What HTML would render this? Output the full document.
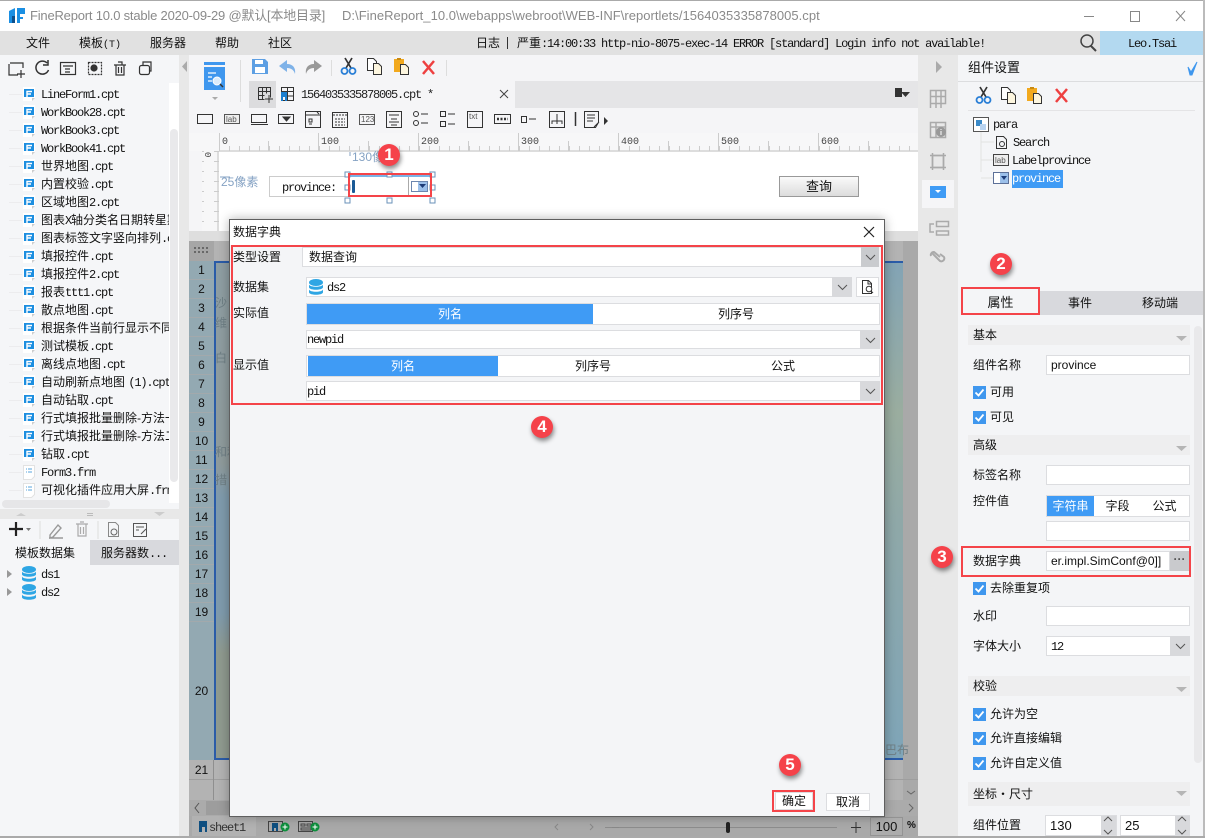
<!DOCTYPE html>
<html lang="zh"><head><meta charset="utf-8"><title>FineReport</title>
<style>
html,body{margin:0;padding:0;width:1205px;height:838px;overflow:hidden;background:#f5f6f8}
body{position:relative;font:12px/16px "Liberation Sans","Noto Sans CJK SC",sans-serif;color:#111}
.b,.t,svg{position:absolute}
.t{white-space:nowrap;height:16px;line-height:16px}
i{font:normal 12px/16px "Liberation Mono","Noto Sans CJK SC",monospace;letter-spacing:-1.2px}
.c{text-align:center}
.f{background:#fff;border:1px solid #dcdde0;box-sizing:border-box}
.s{background:#eeeeef;left:968px;width:222px;box-sizing:border-box;padding-left:5px;line-height:20px;height:20px}
.btn{background:#d8d9dc;box-sizing:border-box}
.bd{position:absolute;width:22px;height:22px;border-radius:50%;background:#f5424a;color:#fff;font:bold 17px/22px "Liberation Sans",sans-serif;text-align:center;box-shadow:1px 3px 5px rgba(0,0,0,.45)}
.red{position:absolute;border:2px solid #f44449;box-sizing:border-box}
.r{left:41px}
.n{left:189px;width:25px;text-align:center;color:#111}
.g{color:#6f7f85}
</style></head><body>

<!-- base regions -->
<div class="b" style="left:0;top:0;width:1205px;height:31px;background:#fff;border-top:1px solid #aaa;box-sizing:border-box"></div>
<div class="b" style="left:0;top:31px;width:1205px;height:24px;background:#e1e1e1"></div>
<div class="b" style="left:1100px;top:31px;width:105px;height:24px;background:#b3d9f0"></div>
<div class="b" style="left:0;top:55px;width:180px;height:783px;background:#f5f6f8"></div>
<div class="b" style="left:169px;top:83px;width:10px;height:420px;background:#fff"></div>
<div class="b" style="left:170px;top:129px;width:8px;height:353px;background:#e9e9eb;border-radius:4px"></div>
<div class="b" style="left:2px;top:500px;width:108px;height:8px;background:#e6e6e8;border-radius:4px"></div>
<div class="b" style="left:0;top:509px;width:179px;height:10px;background:#e8e8e8"></div>
<div class="b" style="left:90px;top:540px;width:89px;height:25px;background:#d8d9dd"></div>
<div class="b" style="left:179px;top:55px;width:10px;height:783px;background:#e8e8e8"></div>
<div class="b" style="left:9px;top:94px;width:13px;height:414px;background:repeating-linear-gradient(#ececee 0 1px,transparent 1px 18px)"></div>
<div class="b" style="left:189px;top:55px;width:729px;height:26px;background:#f5f5f7"></div>
<div class="b" style="left:249px;top:81px;width:669px;height:27px;background:#e5e5e7"></div>
<div class="b" style="left:189px;top:81px;width:60px;height:52px;background:#f5f5f7"></div>
<div class="b" style="left:249px;top:81px;width:27px;height:27px;background:#dcdcde"></div>
<div class="b" style="left:276px;top:81px;width:239px;height:27px;background:#f5f5f7"></div>
<div class="b" style="left:189px;top:108px;width:729px;height:25px;background:#f5f5f7"></div>
<div class="b" style="left:189px;top:133px;width:729px;height:18px;background:#f7f7f8"></div>
<div class="b" style="left:189px;top:151px;width:729px;height:80px;background:#fff"></div>
<div class="b" style="left:189px;top:151px;width:13px;height:80px;background:#f5f5f7"></div>
<div class="b" style="left:202px;top:151px;width:17px;height:80px;background:#f7f7f8;border-right:2px solid #ddd;box-sizing:border-box"></div>
<div class="b" style="left:219px;top:150px;width:699px;height:2px;background:#ddd"></div>
<div class="b" style="left:918px;top:55px;width:40px;height:783px;background:#e8e8e8"></div>
<div class="b" style="left:922px;top:180px;width:32px;height:28px;background:#f5f5f7"></div>
<div class="b" style="left:958px;top:55px;width:247px;height:783px;background:#f4f5f7"></div>
<div class="b" style="left:958px;top:81px;width:247px;height:1px;background:#dcdddf"></div>
<div class="b" style="left:968px;top:110px;width:227px;height:1px;background:#e4e4e6"></div>
<div class="b" style="left:1040px;top:291px;width:165px;height:24px;background:#d8d9dd"></div>
<div class="b" style="left:1194px;top:326px;width:8px;height:437px;background:#e9e9eb;border-radius:4px"></div>
<div class="b" style="left:1203px;top:0;width:2px;height:838px;background:#bbb"></div>
<div class="b" style="left:0;top:836px;width:1205px;height:2px;background:#aaa"></div>

<!-- dimmed sheet -->
<div class="b" style="left:189px;top:231px;width:729px;height:10px;background:#dedede"></div>
<div class="b" style="left:189px;top:241px;width:729px;height:559px;background:#b3b3b3"></div>
<div class="b" style="left:189px;top:241px;width:25px;height:20px;background:#a6a6a6"></div>
<div class="b" style="left:189px;top:261px;width:25px;height:499px;background:repeating-linear-gradient(#93a9b2 0 18px,#a2a9ac 18px 19px)"></div>
<div class="b" style="left:189px;top:622px;width:25px;height:138px;background:#93a9b2"></div>
<div class="b" style="left:214px;top:261px;width:15px;height:499px;background:linear-gradient(#8e9ea3 0,#8f9b9c 200px,#7f9bad 235px,#7f9bad 350px,#8f9a8f 390px,#8f9a8f 100%);border-left:2px solid #2a5ca8;border-bottom:2px solid #2a5ca8;border-top:2px solid #2a5ca8;box-sizing:border-box"></div>
<div class="b" style="left:885px;top:261px;width:18px;height:499px;background:linear-gradient(#83a4b5,#9aad9f 150px,#8fa8a8 260px,#7fa5b8 100%);border-top:2px solid #2a5ca8;border-bottom:2px solid #2a5ca8;box-sizing:border-box"></div>
<div class="b" style="left:903px;top:241px;width:15px;height:559px;background:#a9a9a9"></div>
<div class="b" style="left:214px;top:779px;width:704px;height:1px;background:#9e9e9e"></div>
<div class="b" style="left:189px;top:779px;width:729px;height:1px;background:#9e9e9e"></div>
<div class="b" style="left:213px;top:760px;width:1px;height:40px;background:#8f8f8f"></div>
<div class="b" style="left:189px;top:800px;width:729px;height:16px;background:#ababab"></div>
<div class="b" style="left:206px;top:801px;width:25px;height:14px;background:#9d9d9d"></div>
<div class="b" style="left:189px;top:816px;width:729px;height:20px;background:#a9a9a9"></div>
<div class="b" style="left:192px;top:816px;width:64px;height:20px;background:#b2b2b2"></div>
<div class="b" style="left:870px;top:817px;width:33px;height:19px;background:#acacac;border:1px solid #939393;box-sizing:border-box"></div>
<div class="b" style="left:605px;top:827px;width:232px;height:1px;background:#8c8c8c"></div>
<div class="b" style="left:726px;top:822px;width:4px;height:11px;background:#222;border-radius:2px"></div>

<div class="t n" style="top:262px">1</div><div class="t n" style="top:281px">2</div><div class="t n" style="top:300px">3</div><div class="t n" style="top:319px">4</div><div class="t n" style="top:338px">5</div><div class="t n" style="top:357px">6</div><div class="t n" style="top:376px">7</div><div class="t n" style="top:395px">8</div><div class="t n" style="top:414px">9</div><div class="t n" style="top:433px">10</div><div class="t n" style="top:452px">11</div><div class="t n" style="top:471px">12</div><div class="t n" style="top:490px">13</div><div class="t n" style="top:509px">14</div><div class="t n" style="top:528px">15</div><div class="t n" style="top:547px">16</div><div class="t n" style="top:566px">17</div><div class="t n" style="top:585px">18</div><div class="t n" style="top:604px">19</div><div class="t n" style="top:683px">20</div><div class="t n" style="top:762px">21</div>
<div class="t g" style="left:215px;top:295px">沙</div><div class="t g" style="left:215px;top:315px">维</div><div class="t g" style="left:215px;top:350px">白</div><div class="t g" style="left:215px;top:444px">和利</div><div class="t g" style="left:215px;top:472px">措</div>
<div class="t g" style="left:885px;top:742px">巴布</div>

<!-- title bar -->
<div class="t" style="left:30px;top:8px;color:#8a8a8a;font-size:13px;letter-spacing:-.2px">FineReport 10.0 stable 2020-09-29 @默认[本地目录]</div>
<div class="t" style="left:342px;top:8px;color:#8a8a8a;font-size:13px;letter-spacing:.03px">D:\FineReport_10.0\webapps\webroot\WEB-INF\reportlets/1564035335878005.cpt</div>
<!-- menu -->
<div class="t" style="left:26px;top:35px">文件</div>
<div class="t" style="left:79px;top:35px">模板<i style="font-size:10px;letter-spacing:0">(T)</i></div>
<div class="t" style="left:150px;top:35px">服务器</div>
<div class="t" style="left:215px;top:35px">帮助</div>
<div class="t" style="left:268px;top:35px">社区</div>
<div class="t" style="left:476px;top:35px">日志</div>
<div class="b" style="left:507px;top:37px;width:1px;height:12px;background:#333"></div>
<div class="t" style="left:517px;top:35px">严重<i>:14:00:33 http-nio-8075-exec-14 ERROR [standard] Login info not available!</i></div>
<div class="t" style="left:1128px;top:35px"><i>Leo.Tsai</i></div>

<!-- file tree -->
<div class="b" style="left:0;top:80px;width:169px;height:420px;overflow:hidden">
<div class="t r" style="top:6px"><i>LineForm1.cpt</i></div>
<div class="t r" style="top:24px"><i>WorkBook28.cpt</i></div>
<div class="t r" style="top:42px"><i>WorkBook3.cpt</i></div>
<div class="t r" style="top:60px"><i>WorkBook41.cpt</i></div>
<div class="t r" style="top:78px">世界地图<i>.cpt</i></div>
<div class="t r" style="top:96px">内置校验<i>.cpt</i></div>
<div class="t r" style="top:114px">区域地图<i>2.cpt</i></div>
<div class="t r" style="top:132px">图表<i>X</i>轴分类名日期转星期</div>
<div class="t r" style="top:150px">图表标签文字竖向排列<i>.cpt</i></div>
<div class="t r" style="top:168px">填报控件<i>.cpt</i></div>
<div class="t r" style="top:186px">填报控件<i>2.cpt</i></div>
<div class="t r" style="top:204px">报表<i>ttt1.cpt</i></div>
<div class="t r" style="top:222px">散点地图<i>.cpt</i></div>
<div class="t r" style="top:240px">根据条件当前行显示不同</div>
<div class="t r" style="top:258px">测试模板<i>.cpt</i></div>
<div class="t r" style="top:276px">离线点地图<i>.cpt</i></div>
<div class="t r" style="top:294px">自动刷新点地图 <i>(1).cpt</i></div>
<div class="t r" style="top:312px">自动钻取<i>.cpt</i></div>
<div class="t r" style="top:330px">行式填报批量删除-方法一</div>
<div class="t r" style="top:348px">行式填报批量删除-方法二</div>
<div class="t r" style="top:366px">钻取<i>.cpt</i></div>
<div class="t r" style="top:384px"><i>Form3.frm</i></div>
<div class="t r" style="top:402px">可视化插件应用大屏<i>.frm</i></div>
</div>
<div class="t" style="left:15px;top:545px">模板数据集</div>
<div class="t" style="left:101px;top:545px">服务器数<i>...</i></div>
<div class="t" style="left:41px;top:566px"><i>ds1</i></div>
<div class="t" style="left:41px;top:584px"><i>ds2</i></div>

<!-- toolbar tab -->
<div class="t" style="left:301px;top:86px"><i style="color:#222">1564035335878005.cpt *</i></div>

<!-- canvas -->
<div class="t" style="left:352px;top:149px;color:#86a3c4">130像素</div>
<div class="t" style="left:221px;top:174px;color:#86a3c4">25像素</div>
<div class="b" style="left:269px;top:176px;width:81px;height:21px;border:1px solid #ccc;box-sizing:border-box;background:#fff"></div>
<div class="t" style="left:282px;top:179px"><i>province:</i></div>
<div class="b" style="left:349px;top:175px;width:82px;height:21px;background:#fff;border-top:2px solid #7ab3e6;box-sizing:border-box"></div>
<div class="b" style="left:408px;top:177px;width:1px;height:18px;background:#aaa"></div>
<div class="b" style="left:352px;top:180px;width:3px;height:13px;background:#1a5a96;border-radius:1px"></div>
<div class="b" style="left:779px;top:176px;width:80px;height:21px;background:linear-gradient(#fafafa,#dcdcdc);border:1px solid #999;box-sizing:border-box;text-align:center;line-height:19px;font-size:13px">查询</div>

<!-- right panel text -->
<div class="t" style="left:968px;top:60px;font-size:13px">组件设置</div>
<div class="t" style="left:993px;top:116px"><i>para</i></div>
<div class="t" style="left:1013px;top:134px"><i>Search</i></div>
<div class="t" style="left:1012px;top:152px"><i>Labelprovince</i></div>
<div class="b" style="left:1012px;top:170px;width:51px;height:18px;background:#3f9bf5"></div>
<div class="t" style="left:1012px;top:170px;color:#fff"><i>province</i></div>
<div class="t c" style="left:961px;top:295px;width:79px;font-size:13px">属性</div>
<div class="t c" style="left:1040px;top:295px;width:80px">事件</div>
<div class="t c" style="left:1120px;top:295px;width:80px">移动端</div>

<div class="b s" style="top:325px">基本</div>
<div class="t" style="left:973px;top:357px">组件名称</div>
<div class="b f" style="left:1046px;top:355px;width:144px;height:20px;padding-left:4px;line-height:18px">province</div>
<div class="t" style="left:990px;top:384px">可用</div>
<div class="t" style="left:990px;top:409px">可见</div>
<div class="b s" style="top:435px">高级</div>
<div class="t" style="left:973px;top:467px">标签名称</div>
<div class="b f" style="left:1046px;top:465px;width:144px;height:20px"></div>
<div class="t" style="left:973px;top:493px">控件值</div>
<div class="b f" style="left:1046px;top:495px;width:144px;height:22px"></div>
<div class="b c" style="left:1047px;top:496px;width:47px;height:20px;background:#3f9bf5;color:#fff;line-height:20px">字符串</div>
<div class="t c" style="left:1094px;top:498px;width:47px">字段</div>
<div class="t c" style="left:1141px;top:498px;width:47px">公式</div>
<div class="b f" style="left:1046px;top:521px;width:144px;height:20px"></div>

<div class="t" style="left:973px;top:553px">数据字典</div>
<div class="b f" style="left:1046px;top:551px;width:124px;height:20px;padding-left:4px;line-height:18px;white-space:nowrap;overflow:hidden">er.impl.SimConf@0]]</div>
<div class="b c" style="left:1170px;top:551px;width:19px;height:20px;background:#c9cacd;line-height:17px;color:#555;font-weight:bold">···</div>
<div class="t" style="left:990px;top:580px">去除重复项</div>
<div class="t" style="left:973px;top:608px">水印</div>
<div class="b f" style="left:1046px;top:606px;width:144px;height:20px"></div>
<div class="t" style="left:973px;top:638px">字体大小</div>
<div class="b f" style="left:1046px;top:636px;width:144px;height:20px;padding-left:4px;line-height:18px"><i>12</i></div>
<div class="b btn" style="left:1170px;top:636px;width:20px;height:20px"></div>
<div class="b s" style="top:676px">校验</div>
<div class="t" style="left:990px;top:706px">允许为空</div>
<div class="t" style="left:990px;top:730px">允许直接编辑</div>
<div class="t" style="left:990px;top:755px">允许自定义值</div>
<div class="b s" style="top:782px;height:24px;line-height:24px">坐标・尺寸</div>
<div class="t" style="left:973px;top:817px">组件位置</div>
<div class="b f" style="left:1045px;top:815px;width:72px;height:21px;padding-left:4px;line-height:19px;font-size:13px">130</div>
<div class="b btn" style="left:1101px;top:816px;width:15px;height:19px"></div>
<div class="b f" style="left:1120px;top:815px;width:70px;height:21px;padding-left:4px;line-height:19px;font-size:13px">25</div>
<div class="b btn" style="left:1175px;top:816px;width:15px;height:19px"></div>

<div class="t" style="left:209px;top:819px;color:#333"><i>sheet1</i></div>
<div class="t c" style="left:870px;top:819px;width:33px;font-size:13px">100</div>
<div class="t" style="left:907px;top:818px;font-weight:bold;font-size:10px">%</div>

<!-- icons below modal -->
<svg style="left:0;top:0" width="1205" height="838" viewBox="0 0 1205 838" fill="none">
<defs>
<g id="fi"><path d="M0 0h12v11l-3 3H0z" fill="#fff"/><path d="M9 14l3-3H9z" fill="#ccc"/><rect x="1" y="2" width="10" height="8" fill="#1c8ee0"/><path d="M4 10V4.500h5M4 7h4" stroke="#fff" stroke-width="1.400"/></g>
<g id="fr"><path d="M.5.500h11v11l-3 3H.5z" fill="#fff" stroke="#e2e2e2"/><path d="M3 4h1M5 4h4M3 7h1M5 7h4" stroke="#59a4dc"/></g>
<g id="db"><ellipse cx="8" cy="3.500" rx="7" ry="3.500" fill="#2ea6e4"/><path d="M1 5.500c1 3 13 3 14 0v3c-1 3-13 3-14 0z" fill="#2ea6e4"/><path d="M1 10.500c1 3 13 3 14 0v3c-1 3-13 3-14 0z" fill="#2ea6e4"/></g>
<g id="tri"><path d="M0 0l5 4-5 4z" fill="#999"/></g>
<g id="cut"><path d="M5 0l6 10M12 0L6 10" stroke="#333" stroke-width="1.700"/><circle cx="4.500" cy="13" r="3" stroke="#2a7fd6" stroke-width="1.800"/><circle cx="12.500" cy="13" r="3" stroke="#2a7fd6" stroke-width="1.800"/></g>
<g id="cp"><path d="M.5.500h6l3 3v9h-9z" fill="#fff" stroke="#333"/><path d="M6.500 5.500h5l3 3v8h-8z" fill="#fdf6df" stroke="#333"/></g>
<g id="pt"><rect x="0" y="1" width="10" height="13" fill="#f2a91e"/><rect x="3" y="0" width="4" height="2" fill="#c88a12"/><path d="M6.500 6.500h5l3 3v7h-8z" fill="#fdf6df" stroke="#333"/></g>
<g id="dl"><path d="M1 1l11 13M12 1L1 14" stroke="#ee4040" stroke-width="2.500"/></g>
<g id="ck"><rect width="13" height="13" fill="#3f97ee"/><path d="M2.500 6.500l3 3 5-6" stroke="#fff" stroke-width="1.800"/></g>
<g id="dn"><path d="M0 0l4.500 4.500L9 0" stroke="#555" stroke-width="1"/></g>
<g id="hd"><rect width="5" height="5" fill="#fff" stroke="#6a92b8"/></g>
<g id="sec"><path d="M0 0h11l-5.500 5z" fill="#b5b5b5"/></g>
<pattern id="tk" x="219" y="133" width="10" height="18" patternUnits="userSpaceOnUse"><path d="M.5 13v5" stroke="#ccc"/></pattern>
<pattern id="tky" y="151" width="17" height="10" patternUnits="userSpaceOnUse"><path d="M10 .5h7" stroke="#ccc"/></pattern>
</defs>
<!-- logo -->
<path d="M9 11l6-3v15H9z" fill="#1a8fe3"/><path d="M17 8h8v6h-5v3h3v2h-3v4h-3z" fill="#1a8fe3"/><path d="M12 16h3v7h-3z" fill="#0b4f8c"/>
<!-- window -->
<path d="M1084 16.500h10M1130.500 11.500h9v10h-9zM1176 11l9 10M1185 11l-9 10" stroke="#888"/>
<circle cx="1087" cy="41" r="6" stroke="#444" stroke-width="1.500"/><path d="M1091 46l5 5" stroke="#444" stroke-width="2"/>
<!-- left tools -->
<g stroke="#333" stroke-width="1.200">
<path d="M10 63h13v5M9 64v11h9M21 70v8M17 74h8"/>
<path d="M47 63a6.500 6.500 0 1 0 1.500 7M48 60v5h-5" stroke-width="1.500"/>
<rect x="60.500" y="62.500" width="15" height="12"/><path d="M63 66h10M65 69h5M65 72h5"/>
<rect x="88.500" y="62.500" width="13" height="12" stroke-dasharray="2 1"/><circle cx="94" cy="68" r="3" fill="#333"/>
<path d="M114 65h12M116 65v10h8V65M118 62h4v3M118.500 67v6M121.500 67v6"/>
<rect x="139.500" y="65.500" width="10" height="9" rx="2"/><path d="M143 65v-3h8v9h-2"/>
</g>
<!-- tree icons -->
<use href="#fi" x="23" y="87"/><use href="#fi" x="23" y="105"/><use href="#fi" x="23" y="123"/><use href="#fi" x="23" y="141"/><use href="#fi" x="23" y="159"/><use href="#fi" x="23" y="177"/><use href="#fi" x="23" y="195"/><use href="#fi" x="23" y="213"/><use href="#fi" x="23" y="231"/><use href="#fi" x="23" y="249"/><use href="#fi" x="23" y="267"/><use href="#fi" x="23" y="285"/><use href="#fi" x="23" y="303"/><use href="#fi" x="23" y="321"/><use href="#fi" x="23" y="339"/><use href="#fi" x="23" y="357"/><use href="#fi" x="23" y="375"/><use href="#fi" x="23" y="393"/><use href="#fi" x="23" y="411"/><use href="#fi" x="23" y="429"/><use href="#fi" x="23" y="447"/>
<use href="#fr" x="23" y="465"/><use href="#fr" x="23" y="483"/>
<path d="M16 516l5-3 5 3zM154 512h11l-5.500 4z" fill="#ccc"/><path d="M87 513.500h6M87 515.500h6" stroke="#bbb"/>
<!-- data tools -->
<path d="M9 529h14M16 522v14" stroke="#222" stroke-width="2.200"/><path d="M26 528h5l-2.500 3z" fill="#777"/>
<path d="M40 521v18M98 521v18" stroke="#ddd"/>
<path d="M50 535l8-10 3 3-8 9-3 1zM49 538h14" stroke="#999" stroke-width="1.400"/>
<path d="M76 524h12M78 524v12h8v-12M80 522h4M80.500 527v7M83.500 527v7" stroke="#aaa" stroke-width="1.200"/>
<path d="M108.500 522.500h7l3 3v11h-10z" stroke="#888"/><circle cx="114" cy="532" r="3" stroke="#666"/>
<path d="M133.500 523.500h13v13h-13zM136 527h8M136 530h3M141 534l5-5" stroke="#555"/>
<use href="#tri" x="7" y="570"/><use href="#tri" x="7" y="588"/>
<use href="#db" x="21" y="566"/><use href="#db" x="21" y="584"/>
<!-- collapse -->
<path d="M187 61v11l-5-5.500z" fill="#aaa"/>
<path d="M936 61l6 6-6 6z" fill="#aaa"/>
<!-- big report icon -->
<path d="M204 62h21v3h-21z" fill="#3f97ee"/><path d="M204 67h21v23h-21z" fill="#3f97ee"/><path d="M208 73h8M208 77h4M208 81h4" stroke="#fff" stroke-width="1.300"/><circle cx="217" cy="81" r="4" fill="#dcecfb" stroke="#fff"/><path d="M220 84l3 3" stroke="#333" stroke-width="1.500"/>
<path d="M212 97h6l-3 3z" fill="#aaa"/>
<path d="M240.500 60v42M331.500 60v16M446.500 60v16" stroke="#ddd"/>
<!-- save/undo/redo -->
<path d="M252 59h13l3 3v12h-16z" fill="#5d9fe3"/><rect x="255" y="60" width="8" height="4" fill="#fff"/><rect x="255" y="67" width="10" height="6" fill="#fff"/>
<path d="M287 60l-8 6 8 6v-4c4 0 7 2 8 6 1-6-2-10-8-10z" fill="#7fb2e8"/>
<path d="M314 60l8 6-8 6v-4c-4 0-7 2-8 6-1-6 2-10 8-10z" fill="#999"/>
<use href="#cut" x="340" y="58"/><use href="#cp" x="367" y="58"/><use href="#pt" x="394" y="58"/><use href="#dl" x="422" y="60"/>
<!-- tab icons -->
<path d="M258.500 87.500h12v10M258.500 87.500v12h6M262.500 87.500v12M266.500 87.500v6M258.500 91.500h12M258.500 95.500h6M265 99h8M269 95v8" stroke="#333"/>
<path d="M281.500 87.500h12v13h-12zM287.500 87.500v13M281.500 91.500h12M281.500 96h12" stroke="#333"/><path d="M281 92h6v9h-2v-4h-2v4h-2z" fill="#1a7fd0"/>
<path d="M500 90l8 8M508 90l-8 8" stroke="#444"/>
<path d="M895 88h7v9h-7z" fill="#333"/><path d="M901 92h9l-4.500 5z" fill="#333"/>
<!-- widget toolbar -->
<g stroke="#333">
<rect x="197.500" y="114.500" width="15" height="9"/>
<rect x="224.500" y="114.500" width="15" height="9" fill="#eee" stroke="#555"/>
<rect x="251.500" y="114.500" width="15" height="8"/><path d="M251 124.500h17"/>
<rect x="278.500" y="114.500" width="15" height="9"/><path d="M283 117h7l-3.500 4z" fill="#333"/>
<rect x="305.500" y="111.500" width="15" height="16"/><path d="M305 115h16M317 112l2 2M309 119h3v3h-3zM309 124h3"/>
<rect x="332.500" y="112.500" width="15" height="15"/><path d="M333 115h14M335 119h10M335 122h10M335 125h10" stroke-dasharray="2 1"/>
<rect x="359.500" y="114.500" width="15" height="10" stroke="#555"/>
<rect x="386.500" y="111.500" width="15" height="16"/><path d="M389 115h10M391 119h6M389 122h10M391 125h6"/>
<circle cx="416" cy="114" r="2.500"/><circle cx="416" cy="123" r="2.500"/><path d="M421 114h7M421 123h7"/>
<rect x="440.500" y="111.500" width="5" height="5"/><rect x="440.500" y="121.500" width="5" height="5"/><path d="M448 114h7M448 124h7"/>
<rect x="467.500" y="111.500" width="15" height="16"/>
<rect x="494.500" y="114.500" width="16" height="9"/><path d="M497 119h11" stroke-width="2.500" stroke-dasharray="2 1.500"/>
<rect x="521.500" y="116.500" width="5" height="6"/><path d="M529 119h7"/>
<rect x="549.500" y="111.500" width="15" height="16"/><path d="M557 114v5M552 124v-3h10v3M557 119v5"/>
<path d="M575.500 112v14" stroke-width="1.500"/>
<path d="M584.500 111.500h14v11l-3 5h-11zM587 115h8M587 118h8M587 121h6M594 127l5-5"/>
</g>
<path d="M604 117l4 4-4 4z" fill="#333"/>
<g font-family="Liberation Sans,sans-serif" font-size="8" fill="#555"><text x="226" y="122">lab</text><text x="361" y="122">123</text><text x="469" y="119">txt</text></g>
<!-- rulers -->
<rect x="219" y="133" width="699" height="18" fill="url(#tk)"/>
<path d="M219.500 133v18M318.500 133v18M418.500 133v18M518.500 133v18M618.500 133v18M718.500 133v18M818.500 133v18M268.500 141v10M368.500 141v10M468.500 141v10M568.500 141v10M668.500 141v10M768.500 141v10M868.500 141v10" stroke="#ccc"/>
<g fill="#444" font-family="Liberation Mono,monospace" font-size="10"><text x="222" y="144">0</text><text x="321" y="144">100</text><text x="421" y="144">200</text><text x="521" y="144">300</text><text x="621" y="144">400</text><text x="721" y="144">500</text><text x="821" y="144">600</text></g>
<rect x="202" y="151" width="17" height="80" fill="url(#tky)"/>
<text x="0" y="0" transform="translate(205 152) rotate(90)" fill="#444" font-family="Liberation Mono,monospace" font-size="9">0</text>
<path d="M350 152v4M220 177h10" stroke="#86a3c4"/>
<!-- dropdown icon -->
<rect x="411.500" y="181.500" width="16" height="10" fill="#fff" stroke="#6c86ae"/><rect x="418" y="182" width="9" height="9" fill="#9cc0ea"/><path d="M419 184h7l-3.500 4z" fill="#1d3c78"/>
<use href="#hd" x="345" y="172"/><use href="#hd" x="387" y="172"/><use href="#hd" x="430" y="172"/><use href="#hd" x="345" y="185"/><use href="#hd" x="430" y="185"/><use href="#hd" x="345" y="198"/><use href="#hd" x="387" y="198"/><use href="#hd" x="430" y="198"/>
<!-- right strip -->
<g stroke="#aaa" stroke-width="1.500">
<path d="M930.500 90.500h15v13h-15zM930.500 96.500h15M930.500 103v5M936 90v18M941 90v18"/>
<path d="M930.500 122.500h15v15h-15zM930.500 127h15M936 122v15"/>
<rect x="932.500" y="155.500" width="11" height="12"/><path d="M930 155.500h16M930 167.500h16M932.500 153v17M943.500 153v17"/>
<path d="M936.500 221.500h12v5h-12zM936.500 231h12v4h-12zM934 224h-4v8h4"/>
<path d="M932 253l8 8a3 3 0 0 0 4-4l-4-3M942 261" stroke-width="2"/><path d="M931 256a3 3 0 0 1 3-4l6 5" stroke-width="2"/>
</g>
<circle cx="941" cy="132" r="5" fill="#999"/><path d="M941 129v1M941 131v4" stroke="#fff"/>
<rect x="930" y="186" width="16" height="12" fill="#3f9bf5"/><path d="M935 190h6l-3 3z" fill="#fff"/>
<!-- right top -->
<path d="M1188 67l3 5 6-10-5 13h-2z" fill="#3f97ee" stroke="#3f97ee"/>
<use href="#cut" x="975" y="87"/><use href="#cp" x="1001" y="87"/><use href="#pt" x="1027" y="87"/><use href="#dl" x="1055" y="88"/>
<!-- comp tree -->
<rect x="973.500" y="117.500" width="15" height="14" fill="#fff" stroke="#555"/><rect x="976" y="120" width="6" height="6" fill="#3b8ac8"/><rect x="980" y="124" width="6" height="6" fill="#b8d3f0"/>
<path d="M981 132v40M981 142h13M981 160h12M981 178h12" stroke="#e2e2e2"/>
<path d="M996.500 136.500h7l3 3v9h-10z" fill="#f4f5f7" stroke="#333"/><circle cx="1002" cy="144" r="2.500" stroke="#333"/>
<rect x="993.500" y="154.500" width="15" height="11" fill="#eee" stroke="#444"/>
<text x="995" y="163" font-family="Liberation Sans,sans-serif" font-size="8" fill="#555">lab</text>
<rect x="993.500" y="172.500" width="15" height="11" fill="#fff" stroke="#5c7098"/><rect x="1000" y="173" width="8" height="10" fill="#9cc0ea"/><path d="M1001 176h6l-3 4z" fill="#1d3c78"/>
<!-- section arrows -->
<use href="#sec" x="1176" y="336"/><use href="#sec" x="1176" y="446"/><use href="#sec" x="1176" y="687"/><use href="#sec" x="1176" y="791"/>
<use href="#ck" x="973" y="386"/><use href="#ck" x="973" y="411"/><use href="#ck" x="973" y="582"/><use href="#ck" x="973" y="708"/><use href="#ck" x="973" y="732"/><use href="#ck" x="973" y="757"/>
<use href="#dn" x="1176" y="644"/>
<path d="M1104 821l4-4 4 4M1104 830l4 4 4-4M1178 821l4-4 4 4M1178 830l4 4 4-4" stroke="#555"/>
<!-- bottom -->
<path d="M199 821h8v11h-2v-5h-3v5h-3z" fill="#0f4f80"/>
<path d="M268.500 821.500h14v10h-14zM298.500 821.500h14v10h-14zM301 824h4v2h-4zM307 824h4v2h-4zM301 828h10v2h-10z" stroke="#444"/><path d="M272 823h6v8h-2v-3h-2v3h-2z" fill="#0f4f80"/>
<circle cx="285" cy="827" r="4.500" fill="#0d8f3c"/><circle cx="315" cy="827" r="4.500" fill="#0d8f3c"/><path d="M282.500 827h5M285 824.500v5M312.500 827h5M315 824.500v5" stroke="#fff"/>
<path d="M199 803l-4 5 4 5" stroke="#555"/><path d="M851 827.500h10M856 822v11" stroke="#333"/>
<path d="M907 791l4 3 4-3M909 804l4 4-4 4" stroke="#666"/>
<path d="M558 824l-3 3 3 3M590 824l3 3-3 3M612 827.500h7" stroke="#888"/>
<g fill="#555"><circle cx="195" cy="248" r="1"/><circle cx="199" cy="248" r="1"/><circle cx="203" cy="248" r="1"/><circle cx="207" cy="248" r="1"/><circle cx="195" cy="252" r="1"/><circle cx="199" cy="252" r="1"/><circle cx="203" cy="252" r="1"/><circle cx="207" cy="252" r="1"/></g>
</svg>

<!-- Modal -->
<div class="b" style="left:229px;top:219px;width:656px;height:598px;background:#f4f5f7;border:1px solid #5f5f5f;box-sizing:border-box;box-shadow:0 0 10px rgba(0,0,0,.3)"></div>
<div class="b" style="left:230px;top:220px;width:654px;height:25px;background:#fff"></div>
<div class="t" style="left:233px;top:224px">数据字典</div>
<div class="t" style="left:233px;top:249px">类型设置</div>
<div class="b f" style="left:302px;top:247px;width:560px;height:20px;padding-left:6px;line-height:18px">数据查询</div>
<div class="b" style="left:861px;top:247px;width:18px;height:20px;background:#c9cbce"></div>
<div class="t" style="left:233px;top:279px">数据集</div>
<div class="b f" style="left:306px;top:277px;width:527px;height:20px"></div>
<div class="t" style="left:327px;top:279px"><i>ds2</i></div>
<div class="b btn" style="left:832px;top:277px;width:20px;height:20px"></div>
<div class="b f" style="left:856px;top:277px;width:23px;height:20px"></div>
<div class="t" style="left:233px;top:305px">实际值</div>
<div class="b f" style="left:306px;top:303px;width:574px;height:22px"></div>
<div class="b c" style="left:307px;top:304px;width:286px;height:20px;background:#3f9bf5;color:#fff;line-height:20px">列名</div>
<div class="t c" style="left:593px;top:306px;width:286px">列序号</div>
<div class="b f" style="left:306px;top:330px;width:574px;height:19px;line-height:17px"><i>newpid</i></div>
<div class="b btn" style="left:860px;top:330px;width:20px;height:19px"></div>
<div class="t" style="left:233px;top:357px">显示值</div>
<div class="b f" style="left:306px;top:355px;width:574px;height:22px"></div>
<div class="b c" style="left:308px;top:356px;width:190px;height:20px;background:#3f9bf5;color:#fff;line-height:20px">列名</div>
<div class="t c" style="left:498px;top:358px;width:190px">列序号</div>
<div class="t c" style="left:688px;top:358px;width:190px">公式</div>
<div class="b f" style="left:306px;top:381px;width:574px;height:20px;line-height:18px"><i>pid</i></div>
<div class="b btn" style="left:860px;top:381px;width:20px;height:20px"></div>
<div class="b f c" style="left:775px;top:792px;width:38px;height:18px;line-height:16px">确定</div>
<div class="b f c" style="left:826px;top:793px;width:44px;height:18px;line-height:16px">取消</div>

<svg style="left:0;top:0" width="1205" height="838" viewBox="0 0 1205 838" fill="none">
<path d="M864 227l10 10M874 227l-10 10" stroke="#222" stroke-width="1.200"/>
<use href="#dn" x="866" y="255"/><use href="#dn" x="838" y="285"/><use href="#dn" x="866" y="338"/><use href="#dn" x="866" y="389"/>
<use href="#db" x="308" y="279"/>
<path d="M862.500 280.500h6l3 3v10h-9zM868 281v3h3" stroke="#333"/><circle cx="869" cy="289" r="2.800" fill="#fff" stroke="#333"/><path d="M871 291l2 2" stroke="#333"/>
</svg>

<!-- annotations -->
<div class="red" style="left:231px;top:245px;width:652px;height:160px"></div>
<div class="red" style="left:772px;top:790px;width:43px;height:22px"></div>
<div class="red" style="left:348px;top:173px;width:84px;height:24px"></div>
<div class="red" style="left:961px;top:287px;width:79px;height:28px"></div>
<div class="red" style="left:961px;top:546px;width:230px;height:31px"></div>
<div class="bd" style="left:378px;top:144px">1</div>
<div class="bd" style="left:990px;top:253px">2</div>
<div class="bd" style="left:931px;top:546px">3</div>
<div class="bd" style="left:531px;top:416px">4</div>
<div class="bd" style="left:779px;top:754px">5</div>
</body></html>
